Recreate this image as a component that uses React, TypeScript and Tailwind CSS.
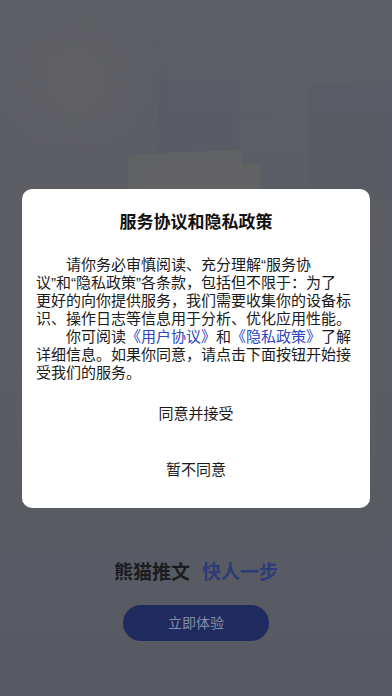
import React from "react";

const font = { fontFamily: '"Liberation Sans", "Noto Sans CJK SC", sans-serif' };

const bodyLines: React.ReactNode[] = [
  <span className="pl-[30px]">请你务必审慎阅读、充分理解“服务协</span>,
  <>议”和“隐私政策”各条款，包括但不限于：为了</>,
  <>更好的向你提供服务，我们需要收集你的设备标</>,
  <>识、操作日志等信息用于分析、优化应用性能。</>,
  <span className="pl-[30px]">
    你可阅读<span className="text-[#2f45c0]">《用户协议》</span>和
    <span className="text-[#2f45c0]">《隐私政策》</span>了解
  </span>,
  <>详细信息。如果你同意，请点击下面按钮开始接</>,
  <>受我们的服务。</>,
];

const PrivacyDialog = () => {
  return (
    <div className="flex flex-col rounded-[10px] bg-white pt-[22px] pb-[10px]">
      <h2 className="text-center text-[17px] font-bold leading-[24px] text-[#111]">
        服务协议和隐私政策
      </h2>
      <div className="mt-[21px] px-[14px] text-[15px] leading-[18px] text-[#1a1a1a]">
        {bodyLines.map((line, i) => (
          <div key={i} className="whitespace-nowrap">
            {line}
          </div>
        ))}
      </div>
      <button className="mt-[4px] h-[56px] text-[15px] text-[#1a1a1a]">同意并接受</button>
      <button className="h-[56px] text-[15px] text-[#1a1a1a]">暂不同意</button>
    </div>
  );
};

export default function App() {
  return (
    <div
      className="relative flex h-[696px] w-[392px] flex-col overflow-hidden bg-gradient-to-b from-[#5e5f64] to-[#575a63]"
      style={font}
    >
      {/* faint background shapes behind the overlay */}
      <div className="absolute left-[157px] top-[80px] h-[120px] w-[82px] rounded-[3px] bg-[#575b65]/60" />
      <div className="absolute left-[308px] top-[82px] h-[120px] w-[90px] -skew-y-3 rounded-[3px] bg-[#585c66]/60" />
      <div className="absolute left-[240px] top-[112px] h-[90px] w-[68px] -skew-y-3 bg-[#5a5d66]/50" />
      <div className="absolute left-[122px] top-[130px] h-[70px] w-[36px] bg-[#5b5e68]/40" />
      <div className="absolute left-[128px] top-[152px] h-[50px] w-[114px] -skew-y-2 rounded-[6px] bg-[#616264]" />
      <div className="absolute left-[146px] top-[166px] h-[40px] w-[114px] -skew-y-2 rounded-[6px] bg-[#636365]" />
      <div className="absolute left-[30px] top-[40px] h-[90px] w-[90px] rounded-full bg-[#67676a]/30 blur-xl" />

      <div className="relative px-[22px] pt-[189px]">
        <PrivacyDialog />
      </div>

      <div className="relative mt-[53px] flex items-center justify-center gap-[12px] text-[19px] font-bold leading-[24px]">
        <span className="text-[#1c1c1f]">熊猫推文</span>
        <span className="text-[#2d3b78]">快人一步</span>
      </div>

      <div className="relative mt-[20px] flex justify-center">
        <button className="h-[36px] w-[146px] rounded-full bg-[#1f2b5f] text-[14px] text-[#868ca6]">
          立即体验
        </button>
      </div>
    </div>
  );
}
